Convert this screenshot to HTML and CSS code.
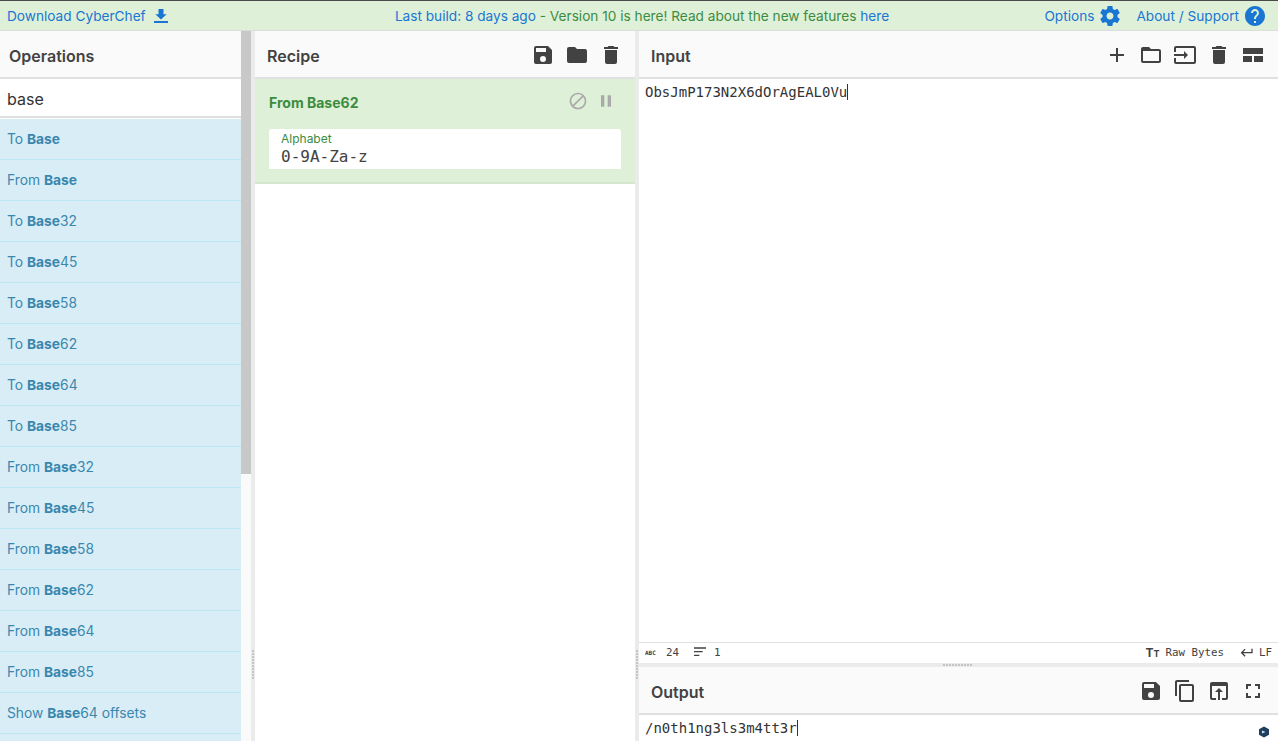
FILE: index.html
```html
<!DOCTYPE html>
<html lang="en">
<head>
<meta charset="utf-8">
<title>CyberChef</title>
<link rel="stylesheet" href="styles.css">
</head>
<body>
<header class="banner">
  <a class="banner-left link">Download CyberChef
    <svg class="ico-dl" viewBox="0 0 16 16"><path d="M5.500 1h5v5.200h3.200L8 11.600 2.300 6.200h3.200z"/><rect x="1" y="13" width="14" height="2"/></svg>
  </a>
  <div class="banner-mid"><span class="link">Last build: 8 days ago</span> <span class="green">- Version 10 is here! Read about the new features</span> <span class="link">here</span></div>
  <div class="banner-right">
    <a class="link opt">Options
      <svg class="ico-20" viewBox="0 0 24 24"><path d="M19.43 12.98c.04-.32.07-.64.07-.98s-.03-.66-.07-.98l2.11-1.65c.19-.15.24-.42.12-.64l-2-3.46c-.12-.22-.39-.3-.61-.22l-2.49 1c-.52-.4-1.08-.73-1.69-.98l-.38-2.65C14.46 2.18 14.25 2 14 2h-4c-.25 0-.46.18-.49.42l-.38 2.65c-.61.25-1.17.59-1.69.98l-2.49-1c-.23-.09-.49 0-.61.22l-2 3.46c-.13.22-.07.49.12.64l2.11 1.65c-.04.32-.07.65-.07.98s.03.66.07.98l-2.11 1.65c-.19.15-.24.42-.12.64l2 3.46c.12.22.39.3.61.22l2.49-1c.52.4 1.08.73 1.69.98l.38 2.65c.03.24.24.42.49.42h4c.25 0 .46-.18.49-.42l.38-2.65c.61-.25 1.17-.59 1.69-.98l2.49 1c.23.09.49 0 .61-.22l2-3.46c.12-.22.07-.49-.12-.64l-2.11-1.65zM12 15.500c-1.93 0-3.500-1.57-3.500-3.500s1.57-3.500 3.500-3.500 3.500 1.57 3.500 3.500-1.57 3.500-3.500 3.500z"/></svg>
    </a>
    <a class="link opt">About / Support
      <svg class="ico-20" viewBox="0 0 24 24"><path d="M12 2C6.48 2 2 6.48 2 12s4.48 10 10 10 10-4.48 10-10S17.52 2 12 2zm1 17h-2v-2h2v2zm2.07-7.750l-.9.92C13.45 12.900 13 13.500 13 15h-2v-.5c0-1.100.45-2.100 1.170-2.830l1.240-1.260c.37-.36.59-.86.59-1.410 0-1.100-.9-2-2-2s-2 .9-2 2H8c0-2.210 1.790-4 4-4s4 1.790 4 4c0 .88-.36 1.680-.93 2.250z"/></svg>
    </a>
  </div>
</header>

<main class="app">
  <section class="ops">
    <div class="ops-main">
      <div class="title">Operations</div>
      <div class="search">base</div>
      <ul class="oplist">
        <li>To <b>Base</b></li>
        <li>From <b>Base</b></li>
        <li>To <b>Base</b>32</li>
        <li>To <b>Base</b>45</li>
        <li>To <b>Base</b>58</li>
        <li>To <b>Base</b>62</li>
        <li>To <b>Base</b>64</li>
        <li>To <b>Base</b>85</li>
        <li>From <b>Base</b>32</li>
        <li>From <b>Base</b>45</li>
        <li>From <b>Base</b>58</li>
        <li>From <b>Base</b>62</li>
        <li>From <b>Base</b>64</li>
        <li>From <b>Base</b>85</li>
        <li>Show <b>Base</b>64 offsets</li>
        <li></li>
      </ul>
    </div>
    <div class="scrolltrack"><div class="scrollthumb"></div></div>
  </section>

  <div class="gutter"><span class="grip"></span></div>

  <section class="recipe">
    <div class="title title-recipe">Recipe
      <div class="tools">
        <svg class="ico" viewBox="0 0 24 24"><path d="M17 3H5a2 2 0 0 0-2 2v14a2 2 0 0 0 2 2h14a2 2 0 0 0 2-2V7l-4-4zm-5 16a3 3 0 1 1 0-6 3 3 0 0 1 0 6zm3-10H5V5h10v4z"/></svg>
        <svg class="ico" viewBox="0 0 24 24"><path d="M10 4H4a2 2 0 0 0-2 2v12a2 2 0 0 0 2 2h16a2 2 0 0 0 2-2V8a2 2 0 0 0-2-2h-8l-2-2z"/></svg>
        <svg class="ico" viewBox="0 0 24 24"><path d="M6 19a2 2 0 0 0 2 2h8a2 2 0 0 0 2-2V7H6v12zM19 4h-3.500l-1-1h-5l-1 1H5v2h14V4z"/></svg>
      </div>
    </div>
    <div class="op">
      <div class="op-head">
        <span class="op-name">From Base62</span>
        <span class="op-btns">
          <svg class="ico-sm" viewBox="0 0 24 24"><path d="M12 2C6.480 2 2 6.480 2 12s4.480 10 10 10 10-4.480 10-10S17.520 2 12 2zM4 12c0-4.420 3.580-8 8-8 1.850 0 3.550.63 4.900 1.690L5.690 16.900A7.902 7.902 0 0 1 4 12zm8 8c-1.850 0-3.550-.63-4.900-1.690L18.310 7.100A7.902 7.902 0 0 1 20 12c0 4.420-3.580 8-8 8z"/></svg>
          <svg class="ico-sm" viewBox="0 0 24 24"><path d="M6 19h4V5H6v14zm8-14v14h4V5h-4z"/></svg>
        </span>
      </div>
      <div class="field">
        <div class="field-label">Alphabet</div>
        <div class="field-value">0-9A-Za-z</div>
      </div>
    </div>
  </section>

  <div class="gutter"><span class="grip"></span></div>

  <section class="io">
    <div class="title title-io">Input
      <div class="tools">
        <svg class="ico" viewBox="0 0 24 24"><path d="M19 13h-6v6h-2v-6H5v-2h6V5h2v6h6v2z"/></svg>
        <svg class="ico" viewBox="0 0 24 24"><path d="M20 6h-8l-2-2H4c-1.100 0-2 .9-2 2v12c0 1.100.9 2 2 2h16c1.100 0 2-.9 2-2V8c0-1.100-.9-2-2-2zm0 12H4V8h16v10z"/></svg>
        <svg class="ico" viewBox="0 0 24 24"><path d="M21 3H3c-1.100 0-2 .9-2 2v4h2V5h18v14H3v-4H1v4c0 1.100.9 2 2 2h18c1.100 0 2-.9 2-2V5c0-1.100-.9-2-2-2zM11 16l4-4-4-4v3H1v2h10v3z"/></svg>
        <svg class="ico" viewBox="0 0 24 24"><path d="M6 19a2 2 0 0 0 2 2h8a2 2 0 0 0 2-2V7H6v12zM19 4h-3.500l-1-1h-5l-1 1H5v2h14V4z"/></svg>
        <svg class="ico" viewBox="0 0 24 24"><path d="M2 5h20v6H2zM2 13h9v6H2zM13 13h9v6h-9z"/></svg>
      </div>
    </div>
    <div class="pane"><span class="mono caret">ObsJmP173N2X6dOrAgEAL0Vu</span></div>
    <div class="status">
      <div class="status-side">
        <span class="abc">ABC</span><span>24</span>
        <svg class="ico-st" viewBox="0 0 24 24"><path d="M3 5h18v2H3zM3 10.500h13v2H3zM3 16h8v2H3z"/></svg><span>1</span>
      </div>
      <div class="status-side">
        <span class="tt">T<small>T</small></span><span>Raw Bytes</span>
        <svg class="ico-st ico-ret" viewBox="0 0 24 24"><path d="M20 7v5H7.800l3.600-3.600L10 7l-6 6 6 6 1.400-1.400L7.800 14H22V7z"/></svg><span>LF</span>
      </div>
    </div>
    <div class="hsplit"><span class="grip-h"></span></div>
    <div class="title title-io">Output
      <div class="tools">
        <svg class="ico" viewBox="0 0 24 24"><path d="M17 3H5a2 2 0 0 0-2 2v14a2 2 0 0 0 2 2h14a2 2 0 0 0 2-2V7l-4-4zm-5 16a3 3 0 1 1 0-6 3 3 0 0 1 0 6zm3-10H5V5h10v4z"/></svg>
        <svg class="ico" viewBox="0 0 24 24"><path d="M16 1H4c-1.100 0-2 .9-2 2v14h2V3h12V1zm3 4H8c-1.100 0-2 .9-2 2v14c0 1.100.9 2 2 2h11c1.100 0 2-.9 2-2V7c0-1.100-.9-2-2-2zm0 16H8V7h11v14z"/></svg>
        <svg class="ico" viewBox="0 0 24 24"><path d="M19 3H5c-1.100 0-2 .9-2 2v14c0 1.100.9 2 2 2h4v-2H5V7h14v12h-4v2h4c1.100 0 2-.9 2-2V5c0-1.100-.9-2-2-2zm-7 6l-4 4h3v8h2v-8h3l-4-4z"/></svg>
        <svg class="ico" viewBox="0 0 24 24"><path d="M7 14H5v5h5v-2H7v-3zm-2-4h2V7h3V5H5v5zm12 7h-3v2h5v-5h-2v3zM14 5v2h3v3h2V5h-5z"/></svg>
      </div>
    </div>
    <div class="pane pane-out">
      <span class="mono caret">/n0th1ng3ls3m4tt3r</span>
      <svg class="badge" viewBox="0 0 12 12"><path d="M6 .5l5 2.800v5.400l-5 2.800-5-2.800V3.300z"/><path class="badge-mark" d="M4 4.500L7.500 6 4 7.500z"/></svg>
    </div>
  </section>
</main>
</body>
</html>
```

FILE: styles.css
```css
* { box-sizing: border-box; }

html, body {
  margin: 0;
  height: 100%;
  overflow: hidden;
}

body {
  display: flex;
  flex-direction: column;
  width: 1278px;
  height: 741px;
  font-family: Inter, "Liberation Sans", sans-serif;
  color: #424242;
  background: #fff;
}

.link { color: #1976d2; }
.green { color: #3c8c3f; }

.banner {
  flex: 0 0 31px;
  display: grid;
  grid-template-columns: 1fr auto 1fr;
  align-items: center;
  padding: 1px 11px 0 7px;
  background: #dff0d8;
  border-top: 1px solid #4a4a4a;
  border-bottom: 1px solid #dcdcdc;
  font-size: 13.650px;
  white-space: nowrap;
}

.banner-left,
.opt {
  display: flex;
  align-items: center;
}

.banner-left { gap: 7px; }
.banner-mid { padding-left: 10px; }

.banner-right {
  display: flex;
  justify-content: flex-end;
  gap: 14px;
}

.opt { gap: 4px; }

.ico-dl { width: 16px; height: 16px; fill: #1976d2; }
.ico-20 { width: 24px; height: 24px; fill: #1976d2; margin: -2px 0; }

.app {
  flex: 1;
  display: flex;
  min-height: 0;
}

.ops {
  flex: 0 0 251px;
  display: flex;
  min-width: 0;
}

.ops-main {
  flex: 0 0 241px;
  display: flex;
  flex-direction: column;
  min-width: 0;
}

.title {
  flex: 0 0 48px;
  display: flex;
  align-items: center;
  padding-left: 9px;
  padding-top: 4px;
  background: #fafafa;
  border-bottom: 2px solid #e0e0e0;
  font-size: 16px;
  font-weight: 600;
  color: #424242;
}

.search {
  flex: 0 0 39px;
  display: flex;
  align-items: center;
  padding: 2px 7px 0;
  background: #fff;
  border-bottom: 2px solid #e0e0e0;
  font-size: 16px;
  color: #333;
}

.oplist {
  flex: 1;
  margin: 1px 0 0;
  padding: 0;
  list-style: none;
  overflow: hidden;
  background: #d9edf7;
}

.oplist li {
  display: block;
  height: 41px;
  padding: 0 7px;
  white-space: pre-wrap;
  font-size: 13.800px;
  line-height: 40px;
  color: #3a87ad;
  border-bottom: 1px solid #bce8f1;
}

.oplist b { font-weight: 700; }

.scrolltrack {
  flex: 0 0 10px;
  background: #fafafa;
}

.scrollthumb {
  height: 443px;
  background: #c8c8c8;
}

.gutter {
  flex: 0 0 4px;
  position: relative;
  background: #ebebeb;
}

.grip {
  position: absolute;
  width: 2px;
  height: 30px;
  top: 619px;
  left: 1px;
  background-image: linear-gradient(#c4c4c4 0 2px, transparent 2px);
  background-size: 2px 3px;
}

.recipe {
  flex: 0 0 380px;
  display: flex;
  flex-direction: column;
  min-width: 0;
  background: #fff;
}

.title-recipe,
.title-io {
  justify-content: space-between;
  padding-left: 12px;
  padding-right: 11px;
}

.title-recipe { padding-right: 10px; }

.tools {
  display: flex;
  align-items: center;
  gap: 6px;
  padding-bottom: 2px;
}

.ico { width: 28px; height: 24px; fill: #424242; }

.op {
  padding: 0 14px;
  height: 105px;
  background: #dff0d8;
  border-bottom: 2px solid #d6e6cf;
}

.op-head {
  height: 46px;
  margin-bottom: 4px;
  display: flex;
  align-items: center;
  justify-content: space-between;
  padding-right: 5px;
}

.op-name {
  font-size: 14px;
  font-weight: 700;
  color: #3c8c3f;
}

.op-btns {
  display: flex;
  gap: 8px;
  padding-bottom: 2px;
}

.ico-sm { width: 20px; height: 20px; fill: #aaa; }

.field {
  height: 40px;
  padding: 3px 12px 0;
  background: #fff;
  border-radius: 3px 3px 0 0;
}

.field-label {
  font-size: 12px;
  line-height: 14px;
  color: #3c8c3f;
}

.field-value {
  font-family: "DejaVu Sans Mono", "Liberation Mono", monospace;
  font-size: 16px;
  line-height: 22px;
  color: #424242;
}

.io {
  flex: 1;
  display: flex;
  flex-direction: column;
  min-width: 0;
}

.pane {
  flex: 1;
  padding: 3px 6px;
  background: #fff;
  position: relative;
  line-height: 19px;
}

.pane-out {
  flex: 0 0 26px;
}

.mono {
  font-family: "DejaVu Sans Mono", "Liberation Mono", monospace;
  font-size: 14px;
  color: #333;
}

.caret { border-right: 1px solid #333; }

.status {
  flex: 0 0 21px;
  display: flex;
  justify-content: space-between;
  align-items: center;
  padding: 0 6px 2px;
  background: #fff;
  border-top: 1px solid #e0e0e0;
  font-family: "DejaVu Sans Mono", "Liberation Mono", monospace;
  font-size: 10.800px;
  color: #424242;
}

.status-side {
  display: flex;
  align-items: center;
}

.abc {
  font-size: 6px;
  font-weight: 700;
  margin-right: 8px;
  width: 13px;
}

.ico-st {
  width: 16px;
  height: 16px;
  fill: #424242;
  margin: 0 6px 0 13px;
}

.ico-ret { margin: 0 5px 0 14px; }

.tt {
  font-family: Inter, sans-serif;
  font-size: 12px;
  font-weight: 700;
  margin-right: 6px;
}

.tt small { font-size: 9px; }

.hsplit {
  flex: 0 0 4px;
  background: #ebebeb;
  position: relative;
}

.grip-h {
  position: absolute;
  left: 304px;
  top: 1px;
  width: 30px;
  height: 2px;
  background-image: linear-gradient(90deg, #c4c4c4 0 2px, transparent 2px);
  background-size: 3px 2px;
}

.badge {
  position: absolute;
  right: 8px;
  bottom: 3px;
  width: 12px;
  height: 12px;
  fill: #1f3f5f;
}

.badge-mark { fill: #cfe0ee; }
```
